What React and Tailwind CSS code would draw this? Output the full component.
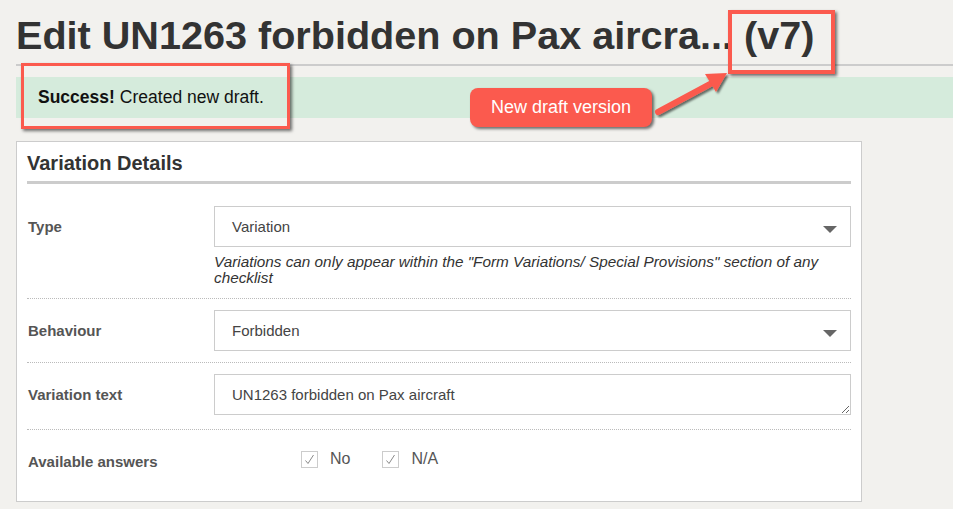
import React from "react";

function Caret() {
  return (
    <svg width="14" height="8" viewBox="0 0 14 8" className="absolute right-[13px] top-[19px]">
      <path d="M0 0 L14 0 L7 7 Z" fill="#666" />
    </svg>
  );
}

function Check({ label }) {
  return (
    <label className="flex items-center">
      <span className="w-[17px] h-[17px] border border-[#ccc] bg-white flex items-center justify-center">
        <svg width="11" height="11" viewBox="0 0 11 11">
          <path d="M1.5 6.5 L4 9.5 L9.5 1" fill="none" stroke="#8a8a8a" strokeWidth="1" />
        </svg>
      </span>
      <span className="ml-[12px] text-[16px] text-[#555]">{label}</span>
    </label>
  );
}

export default function App() {
  return (
    <div className="relative w-[953px] h-[509px] overflow-hidden bg-[#f2f1ee] font-['Liberation_Sans',Arial,sans-serif]">
      <div className="pl-[16px]">
        <h1 className="pt-[13px] text-[39.6px] leading-[45px] font-bold text-[#333] whitespace-nowrap">
          Edit UN1263 forbidden on Pax aircra... (v7)
        </h1>
        <div className="mt-[6px] h-[2px] bg-[#ccc]" />
        <div className="mt-[11px] h-[41px] bg-[#d5ebdc] flex items-center pl-[22px] text-[17.5px] text-[#111]">
          <b>Success!</b>
          <span className="ml-[5px]">Created new draft.</span>
        </div>
        <div className="mt-[23px] w-[846px] h-[361px] bg-white border border-[#ccc] px-[10px]">
          <div className="pt-[10px] pb-[7px] border-b-[3px] border-[#ccc] text-[20px] font-bold text-[#333] leading-[22px]">
            Variation Details
          </div>
          <div className="flex pt-[22px] pb-[12px] border-b border-dotted border-[#bbb]">
            <div className="w-[187px] pl-[1px] pt-[10px] text-[15px] font-bold text-[#555]">Type</div>
            <div className="flex-1">
              <div className="relative h-[41px] border border-[#ccc] flex items-center pl-[17px] pt-[1px] text-[15px] text-[#444]">
                Variation
                <Caret />
              </div>
              <p className="mt-[7px] text-[15.3px] italic text-[#333] leading-[16px]">
                Variations can only appear within the "Form Variations/ Special Provisions" section of any checklist
              </p>
            </div>
          </div>
          <div className="flex pt-[11px] pb-[11px] border-b border-dotted border-[#bbb]">
            <div className="w-[187px] pl-[1px] pt-[10px] text-[15px] font-bold text-[#555]">Behaviour</div>
            <div className="flex-1">
              <div className="relative h-[41px] border border-[#ccc] flex items-center pl-[17px] pt-[1px] text-[15px] text-[#444]">
                Forbidden
                <Caret />
              </div>
            </div>
          </div>
          <div className="flex pt-[11px] pb-[14px] border-b border-dotted border-[#bbb]">
            <div className="w-[187px] pl-[1px] pt-[10px] text-[15px] font-bold text-[#555]">Variation text</div>
            <div className="flex-1 flex">
              <textarea
                readOnly
                defaultValue="UN1263 forbidden on Pax aircraft"
                className="block w-full h-[41px] border border-[#ccc] pl-[17px] pt-[11px] text-[15px] text-[#444] leading-[17px] outline-none overflow-hidden font-['Liberation_Sans',Arial,sans-serif]"
              />
            </div>
          </div>
          <div className="flex items-center pt-[15px]">
            <div className="w-[274px] pl-[1px] pt-[6px] text-[15px] font-bold text-[#555]">Available answers</div>
            <div className="flex gap-[32px]">
              <Check label="No" />
              <Check label="N/A" />
            </div>
          </div>
        </div>
      </div>

      {/* Annotations */}
      <div className="absolute left-[21px] top-[63px] w-[269px] h-[66px] border-[3px] border-[#fb5a4e] shadow-[2px_2px_3px_rgba(0,0,0,0.55)]" />
      <div className="absolute left-[728px] top-[10px] w-[107px] h-[64px] border-[4px] border-[#fb5a4e] shadow-[2px_2px_3px_rgba(0,0,0,0.55)]" />
      <div className="absolute left-[470px] top-[88px] w-[182px] h-[39px] rounded-[8px] bg-[#fb5a4e] shadow-[2px_2px_3px_rgba(0,0,0,0.55)] flex items-center justify-center text-white text-[18px]">
        New draft version
      </div>
      <svg className="absolute left-0 top-0" width="953" height="509" style={{ pointerEvents: "none" }}>
        <defs>
          <filter id="sh" x="-20%" y="-20%" width="140%" height="140%">
            <feDropShadow dx="2" dy="2" stdDeviation="1.2" floodColor="#000" floodOpacity="0.55" />
          </filter>
        </defs>
        <g filter="url(#sh)">
          <line x1="658" y1="112" x2="712" y2="83" stroke="#fb5a4e" strokeWidth="6" strokeLinecap="round" />
          <path d="M727 73 L705 74 L716 92 Z" fill="#fb5a4e" />
        </g>
      </svg>
    </div>
  );
}
